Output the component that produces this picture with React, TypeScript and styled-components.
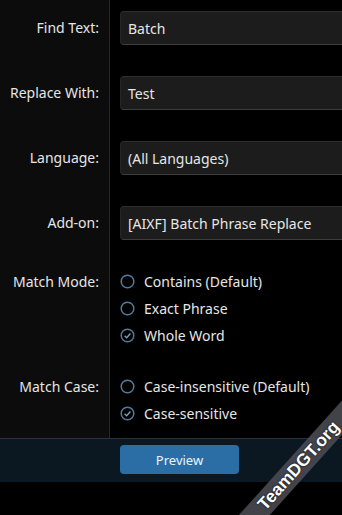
import React from 'react'
import styled, { createGlobalStyle } from 'styled-components'

const GlobalStyle = createGlobalStyle`
  html, body {
    margin: 0;
    padding: 0;
    background-color: #000;
  }
  * {
    box-sizing: border-box;
  }
`

const Page = styled.div`
  position: relative;
  width: 342px;
  height: 515px;
  overflow: hidden;
  background-color: #000;
  font-family: 'Noto Sans', 'Open Sans', sans-serif;
  font-size: 14px;
  color: #e6e6e6;
`
const Form = styled.div`
  display: flex;
  flex-direction: column;
`
const Row = styled.div<{ $top: number; $bottom: number }>`
  display: flex;
  align-items: stretch;
  & > * {
    padding-top: ${(p) => p.$top}px;
    padding-bottom: ${(p) => p.$bottom}px;
  }
`
const Label = styled.div<{ $lh: number }>`
  flex: 0 0 110px;
  background-color: #0c0c0c;
  border-right: 1px solid #262626;
  padding-right: 10px;
  text-align: right;
  line-height: ${(p) => p.$lh}px;
  white-space: nowrap;
`
const Control = styled.div`
  flex: 1;
  padding-left: 10px;
  display: flex;
  flex-direction: column;
`
const Input = styled.div`
  height: 34px;
  width: 260px;
  background-color: #1c1c1c;
  border: 1px solid #262626;
  border-top-color: #2e2e2e;
  border-bottom-color: #3d3d3d;
  border-radius: 4px;
  padding: 0 7px;
  display: flex;
  align-items: center;
  white-space: nowrap;
`
const Radio = styled.div`
  display: flex;
  align-items: center;
  height: 27px;
  gap: 9px;
  white-space: nowrap;
`
const Footer = styled.div`
  height: 44px;
  border-top: 1px solid #2a333b;
  background-color: #0b1821;
  padding: 6px 0 0 120px;
`
const Button = styled.div`
  width: 119px;
  height: 29px;
  border-radius: 4px;
  background-color: #2b6ea6;
  color: #eef3f8;
  font-size: 13px;
  display: flex;
  align-items: center;
  justify-content: center;
`
const Watermark = styled.div`
  position: absolute;
  left: 178px;
  top: 455px;
  width: 240px;
  height: 23px;
  transform: rotate(-48deg);
  background-color: rgba(78, 78, 86, 0.85);
  color: #fff;
  font-family: 'Liberation Sans', Arial, sans-serif;
  font-weight: bold;
  font-size: 17.5px;
  display: flex;
  align-items: center;
  justify-content: center;
  padding-left: 2px;
  text-shadow: 0 0 2px #000;
`

function RadioIcon({ checked }: { checked?: boolean }) {
  return (
    <svg width="15" height="15" viewBox="0 0 15 15">
      <circle cx="7.5" cy="7.5" r="6.3" fill="none" stroke="#55799a" strokeWidth="1.5" />
      {checked && (
        <path d="M4.6 7.7 L6.7 9.7 L10.4 5.5" fill="none" stroke="#7f9cb8" strokeWidth="1.4" />
      )}
    </svg>
  )
}

const fields: Array<[string, string]> = [
  ['Find Text:', 'Batch'],
  ['Replace With:', 'Test'],
  ['Language:', '(All Languages)'],
  ['Add-on:', '[AIXF] Batch Phrase Replace'],
]

const groups: Array<{ label: string; options: string[]; selected: number; top: number; bottom: number }> = [
  { label: 'Match Mode:', options: ['Contains (Default)', 'Exact Phrase', 'Whole Word'], selected: 2, top: 8, bottom: 12 },
  { label: 'Match Case:', options: ['Case-insensitive (Default)', 'Case-sensitive'], selected: 1, top: 12, bottom: 11 },
]

function App() {
  return (
    <>
      <GlobalStyle />
      <Page>
        <Form>
          {fields.map(([label, value]) => (
            <Row key={label} $top={11} $bottom={20}>
              <Label $lh={34}>{label}</Label>
              <Control>
                <Input>{value}</Input>
              </Control>
            </Row>
          ))}
          {groups.map((g) => (
            <Row key={g.label} $top={g.top} $bottom={g.bottom}>
              <Label $lh={27}>{g.label}</Label>
              <Control>
                {g.options.map((opt, i) => (
                  <Radio key={opt}>
                    <RadioIcon checked={i === g.selected} />
                    {opt}
                  </Radio>
                ))}
              </Control>
            </Row>
          ))}
        </Form>
        <Footer>
          <Button>Preview</Button>
        </Footer>
        <Watermark>TeamDGT.org</Watermark>
      </Page>
    </>
  )
}

export default App
